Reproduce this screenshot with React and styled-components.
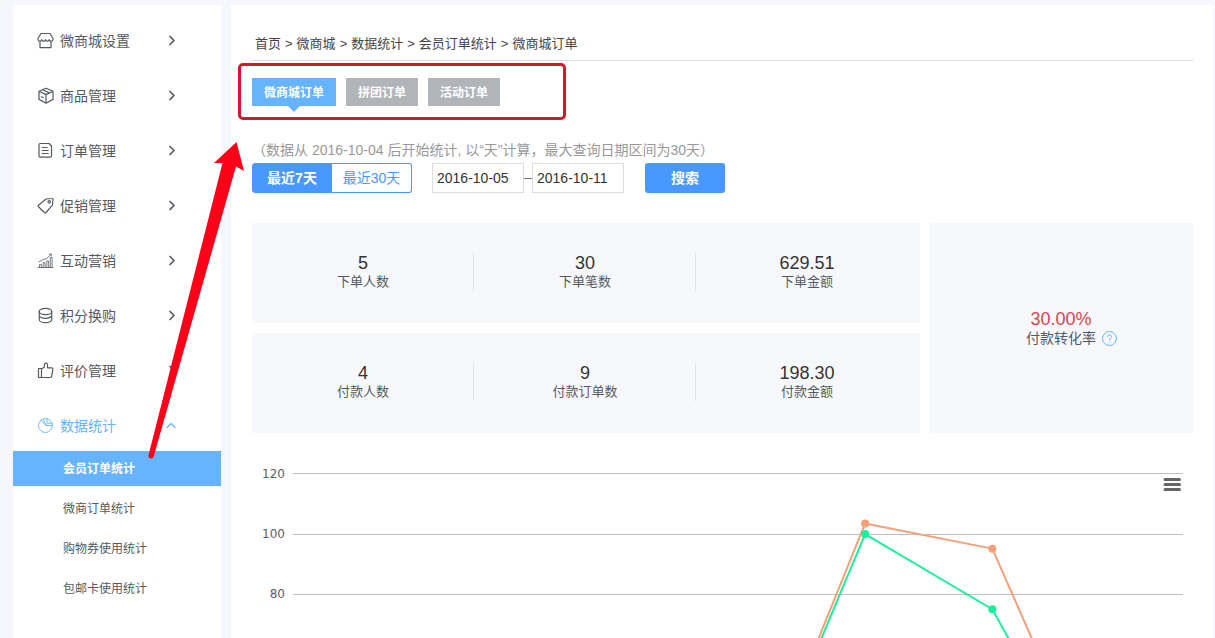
import styled, { createGlobalStyle, css } from 'styled-components';

const colors = {
    page: '#f5f7fc',
    panel: '#ffffff',
    card: '#f7f8fc',
    sky: '#66b3ff',
    blue: '#4898ff',
    greyTab: '#b1b5b9',
    text: '#555a5f',
    dark: '#333333',
    muted: '#999999',
    line: '#dddddd',
    grid: '#c0c0c0',
    danger: '#d9444f',
    mark: '#ff0019',
    orange: '#f4a078',
    green: '#19f09a',
};

const GlobalStyle = createGlobalStyle`
    * {
        box-sizing: border-box;
    }
    body {
        margin: 0;
        background: ${colors.page};
        color: ${colors.text};
        font-family: "Liberation Sans", "Noto Sans CJK SC", sans-serif;
        font-size: 14px;
    }
    button, input {
        font: inherit;
        margin: 0;
    }
    a {
        color: inherit;
        text-decoration: none;
    }
`

const Page = styled.div`
    position: relative;
    display: flex;
    gap: 10px;
    height: 100vh;
    padding: 5px 2px 0 13px;
    overflow: hidden;
`
const Sidebar = styled.nav`
    flex: 0 0 208px;
    background: ${colors.panel};
    padding-top: 10px;
`
const List = styled.ul`
    list-style: none;
    margin: 0;
    padding: 0;
    display: flex;
    flex-direction: column;
    gap: 5px;
`
const MenuLink = styled.a`
    display: flex;
    align-items: center;
    gap: 6px;
    height: 50px;
    padding: 0 43px 0 24px;
    color: ${({ $open }) => ($open ? colors.sky : colors.text)};
`
const MenuText = styled.span`
    flex: 1;
`
const SubList = styled(List)`
    padding-top: 1px;
`
const SubLink = styled.a`
    display: flex;
    align-items: center;
    height: 35px;
    padding: 0 0 2px 50px;
    font-size: 12px;
    ${({ $active }) => $active && css`
        background: ${colors.sky};
        color: #fff;
        font-weight: bold;
    `}
`
const Icon = styled.svg`
    flex: none;
    width: ${({ $size }) => $size || 17}px;
    height: ${({ $size }) => $size || 17}px;
    fill: none;
    stroke: currentColor;
    stroke-width: ${({ $weight }) => $weight || 1.2};
    stroke-linecap: round;
    stroke-linejoin: round;
`

const Main = styled.main`
    flex: 1;
    min-width: 0;
    display: flex;
    flex-direction: column;
    background: ${colors.panel};
    padding: 22px 20px 0 21px;
`
const Breadcrumb = styled.div`
    display: flex;
    gap: 4px;
    padding-left: 3px;
    font-size: 13px;
    line-height: 33px;
    color: #444;
    border-bottom: 1px solid ${colors.line};
`
const Tabs = styled.div`
    position: relative;
    align-self: flex-start;
    display: flex;
    gap: 10px;
    margin-top: 17px;
`
const Tab = styled.button`
    position: relative;
    height: 28px;
    padding: 0 12px 2px;
    border: 0;
    font-size: 12px;
    font-weight: bold;
    color: #fff;
    background: ${({ $active }) => ($active ? colors.sky : colors.greyTab)};
    ${({ $active }) => $active && css`
        &::after {
            content: "";
            position: absolute;
            top: 100%;
            left: 50%;
            margin-left: -6px;
            border: 6px solid transparent;
            border-top-color: ${colors.sky};
            border-bottom: 0;
        }
    `}
`
const TabsFrame = styled.div`
    position: absolute;
    inset: -15px -66px -14px -14px;
    border: 3px solid #d9142b;
    border-radius: 5px;
    pointer-events: none;
`
const Note = styled.p`
    margin: 34px 0 3px;
    line-height: 20px;
    color: ${colors.muted};
`
const Filters = styled.form`
    display: flex;
    align-items: center;
`
const Ranges = styled.div`
    display: flex;
    margin-right: 20px;
`
const RangeButton = styled.button`
    width: 80px;
    height: 30px;
    padding: 0 0 2px;
    border: 1px solid ${colors.blue};
    border-radius: 3px 0 0 3px;
    background: ${({ $active }) => ($active ? colors.blue : '#fff')};
    color: ${({ $active }) => ($active ? '#fff' : colors.blue)};
    font-weight: ${({ $active }) => ($active ? 'bold' : 'normal')};
    & + & {
        border-left: 0;
        border-radius: 0 3px 3px 0;
    }
`
const DateInput = styled.input`
    width: 92px;
    height: 30px;
    padding: 0 4px;
    border: 1px solid ${colors.line};
    background: #fff;
    color: ${colors.dark};
`
const Dash = styled.span`
    width: 8px;
    height: 1px;
    background: #777;
`
const SearchButton = styled.button`
    width: 80px;
    height: 30px;
    margin-left: 21px;
    padding: 0 0 2px;
    border: 0;
    border-radius: 3px;
    background: ${colors.blue};
    color: #fff;
    font-weight: bold;
`
const Summary = styled.section`
    display: grid;
    grid-template-columns: 668fr 264fr;
    gap: 9px;
    margin-top: 30px;
`
const StatRows = styled.div`
    display: grid;
    gap: 10px;
`
const StatRow = styled.div`
    display: grid;
    grid-template-columns: repeat(3, 1fr);
    padding: 30px 2px 32px 0;
    background: ${colors.card};
`
const Stat = styled.div`
    text-align: center;
    & + & {
        box-shadow: -1px 0 0 #e2e4e8;
    }
`
const StatValue = styled.div`
    font-size: 18px;
    line-height: 20px;
    color: ${({ $danger }) => ($danger ? colors.danger : colors.dark)};
`
const StatLabel = styled.div`
    font-size: 13px;
    line-height: 18px;
`
const RateCard = styled.div`
    display: flex;
    flex-direction: column;
    align-items: center;
    justify-content: center;
    background: ${colors.card};
`
const RateLabel = styled.div`
    display: flex;
    align-items: center;
    gap: 6px;
    line-height: 18px;
    /* keeps the label centred while the help icon hangs to its right */
    &::before {
        content: "";
        width: 15px;
    }
`
const HelpButton = styled.button`
    display: flex;
    padding: 0;
    border: 0;
    background: none;
    color: ${colors.sky};
`
const Chart = styled.section`
    position: relative;
    flex: 1;
    min-height: 0;
    display: flex;
    gap: 8px;
    margin-top: 20px;
    padding-right: 10px;
`
const Axis = styled.div`
    width: 33px;
    padding-top: 11px;
    display: flex;
    flex-direction: column;
    gap: 40px;
    text-align: right;
    font: 12px/20px "DejaVu Sans", sans-serif;
    color: #606060;
`
const Plot = styled.svg`
    flex: 1;
    min-width: 0;
    height: 100%;
    overflow: hidden;
`
const ChartMenu = styled.button`
    position: absolute;
    top: 22px;
    right: 10px;
    display: flex;
    padding: 0;
    border: 0;
    background: none;
    color: #666;
`
const Arrow = styled.svg`
    position: absolute;
    top: 140px;
    left: 140px;
    width: 110px;
    height: 320px;
    fill: ${colors.mark};
    pointer-events: none;
`

const menu = [
    {
        name: '微商城设置',
        icon: <path d="M4 1.500h9l3 5v1.200a1.900 1.900 0 0 1-3.750 0 1.900 1.900 0 0 1-3.750 0 1.900 1.900 0 0 1-3.750 0 1.900 1.900 0 0 1-3.750 0V6.500zM3 9.600v6h11v-6" />,
    },
    {
        name: '商品管理',
        icon: <path d="M9 1.200l7 3v8.200l-7 3.800-7-3.800V4.200zM2 4.200l7 3.400 7-3.400M9 7.600v8.600M5.500 2.700l7 3.200M4.300 9.800l2 1" />,
    },
    {
        name: '订单管理',
        icon: <path d="M3.200 1.500h8.800l2.500 2.500v10a1.200 1.200 0 0 1-1.200 1.200H3.200A1.200 1.200 0 0 1 2 14V2.700a1.200 1.200 0 0 1 1.200-1.200zM5.200 5.500h5M5.200 8.500h6M5.200 11.500h6" />,
    },
    {
        name: '促销管理',
        icon: <><path d="M9 2l6-.5a.9.9 0 0 1 1 1l-.6 5.700-6.400 7.300a1.200 1.200 0 0 1-1.600 0L1.500 9.800a1.200 1.200 0 0 1 0-1.600z" /><circle cx="12.200" cy="4.900" r="1.200" /></>,
    },
    {
        name: '互动营销',
        weight: 0.8,
        icon: <path d="M1 15.500h15M2.500 15.500v-3h1.800v3M6.200 15.500v-4.800H8v4.800M9.800 15.500V9h1.800v6.500M13.300 15.500V5.500h1.800v10M2 9.800l4-2.200 3.500-1L14 2.500M12.300 2.200l2-.2v2" />,
    },
    {
        name: '积分换购',
        icon: <><ellipse cx="8.500" cy="4.500" rx="6.300" ry="3.100" /><path d="M2.200 4.500v3.600c0 1.800 2.800 3.200 6.300 3.200s6.300-1.400 6.300-3.200V4.500M2.200 9.700v2.800c0 1.800 2.800 3.200 6.300 3.200s6.300-1.400 6.300-3.200V9.700" /></>,
    },
    {
        name: '评价管理',
        icon: <path d="M1.500 6.500h3v9h-3zM4.500 6.800l2.800-1.500V2.800c0-1 .6-1.600 1.500-1.600 1 0 1.700.8 1.700 1.800v2.800h4.200c.8 0 1.300.6 1.200 1.400l-1.200 6.900c-.1.800-.8 1.400-1.600 1.400H4.500" />,
    },
    {
        name: '数据统计',
        open: true,
        weight: 0.9,
        icon: <><circle cx="8.500" cy="8.500" r="7" /><path d="M9 8.500h6.500M9 8.500L4 3.200M10 1.700v4.600h4.800M6.500 2.500L9 8.500" /></>,
        children: ['会员订单统计', '微商订单统计', '购物券使用统计', '包邮卡使用统计'],
    },
];

const stats = [
    [['5', '下单人数'], ['30', '下单笔数'], ['629.51', '下单金额']],
    [['4', '付款人数'], ['9', '付款订单数'], ['198.30', '付款金额']],
];

const crumbs = ['首页', '微商城', '数据统计', '会员订单统计', '微商城订单'];

const ticks = [120, 100, 80];
const series = [
    { color: colors.orange, data: [0, 0, 0, 0, 103.5, 95.2, 0] },
    { color: colors.green, data: [0, 0, 0, 0, 100, 75.2, 0] },
];

const px = i => `${((i + 0.5) / 7) * 100}%`;
const py = value => 20.5 + (120 - value) * 3.03;

function LineChart() {
    return (
        <Chart aria-label="订单趋势">
            <Axis>
                {ticks.map(t => <span key={t}>{t}</span>)}
            </Axis>
            <Plot>
                {ticks.map(t => (
                    <line key={t} x1="0" x2="100%" y1={Math.floor(py(t)) + 0.5} y2={Math.floor(py(t)) + 0.5} stroke={colors.grid} />
                ))}
                {series.map(({ color, data }) => (
                    <g key={color} stroke={color} fill={color} strokeWidth="2">
                        {data.slice(1).map((v, i) => (
                            <line key={i} x1={px(i)} y1={py(data[i])} x2={px(i + 1)} y2={py(v)} />
                        ))}
                        {data.map((v, i) => (
                            <circle key={i} cx={px(i)} cy={py(v)} r="4" stroke="none" />
                        ))}
                    </g>
                ))}
            </Plot>
            <ChartMenu type="button" aria-label="图表菜单">
                <Icon $size={20} $weight={3} viewBox="0 0 20 20">
                    <path d="M2 4.500h14.500M2 9.500h14.500M2 14.500h14.500" />
                </Icon>
            </ChartMenu>
        </Chart>
    )
}

function SideMenu() {
    return (
        <Sidebar>
            <List>
                {menu.map(item => (
                    <li key={item.name}>
                        <MenuLink href="#" $open={item.open}>
                            <Icon viewBox="0 0 17 17" $weight={item.weight}>{item.icon}</Icon>
                            <MenuText>{item.name}</MenuText>
                            <Icon viewBox="0 0 12 12" $size={12} $weight={item.open ? 1.2 : 1.7}>
                                <path d={item.open ? 'M1 8.500l4-4 4 4' : 'M4 2.500l4 4-4 4'} />
                            </Icon>
                        </MenuLink>
                        {item.children && (
                            <SubList>
                                {item.children.map((child, i) => (
                                    <li key={child}>
                                        <SubLink href="#" $active={i === 0}>{child}</SubLink>
                                    </li>
                                ))}
                            </SubList>
                        )}
                    </li>
                ))}
            </List>
        </Sidebar>
    )
}

export default function App() {
    return (
        <>
            <GlobalStyle />
            <Page>
                <SideMenu />
                <Main>
                    <Breadcrumb>
                        {crumbs.map((crumb, i) => [
                            i > 0 && <span key={i}>&gt;</span>,
                            <a key={crumb} href="#">{crumb}</a>,
                        ])}
                    </Breadcrumb>
                    <Tabs>
                        <Tab type="button" $active>微商城订单</Tab>
                        <Tab type="button">拼团订单</Tab>
                        <Tab type="button">活动订单</Tab>
                        <TabsFrame />
                    </Tabs>
                    <Note>（数据从 2016-10-04 后开始统计, 以“天”计算，最大查询日期区间为30天）</Note>
                    <Filters>
                        <Ranges>
                            <RangeButton type="button" $active>最近7天</RangeButton>
                            <RangeButton type="button">最近30天</RangeButton>
                        </Ranges>
                        <DateInput aria-label="开始日期" defaultValue="2016-10-05" />
                        <Dash />
                        <DateInput aria-label="结束日期" defaultValue="2016-10-11" />
                        <SearchButton type="button">搜索</SearchButton>
                    </Filters>
                    <Summary>
                        <StatRows>
                            {stats.map((row, i) => (
                                <StatRow key={i}>
                                    {row.map(([value, label]) => (
                                        <Stat key={label}>
                                            <StatValue>{value}</StatValue>
                                            <StatLabel>{label}</StatLabel>
                                        </Stat>
                                    ))}
                                </StatRow>
                            ))}
                        </StatRows>
                        <RateCard>
                            <StatValue $danger>30.00%</StatValue>
                            <RateLabel>
                                付款转化率
                                <HelpButton type="button" aria-label="说明">
                                    <Icon $size={15} $weight={1} viewBox="0 0 15 15">
                                        <circle cx="7.500" cy="7.500" r="7" />
                                        <path d="M5.500 5.800c0-1.200.9-1.900 2-1.900s2 .7 2 1.800c0 1.300-2 1.500-2 3.100M7.500 10.900v.2" />
                                    </Icon>
                                </HelpButton>
                            </RateLabel>
                        </RateCard>
                    </Summary>
                    <LineChart />
                </Main>
                <Arrow viewBox="0 0 110 320" aria-hidden="true">
                    <path d="M96.500 2L104 31l-8-4.500L13.700 316.500a2.600 2.600 0 0 1-5.200-1.200L82.500 23H74z" />
                </Arrow>
            </Page>
        </>
    )
}
